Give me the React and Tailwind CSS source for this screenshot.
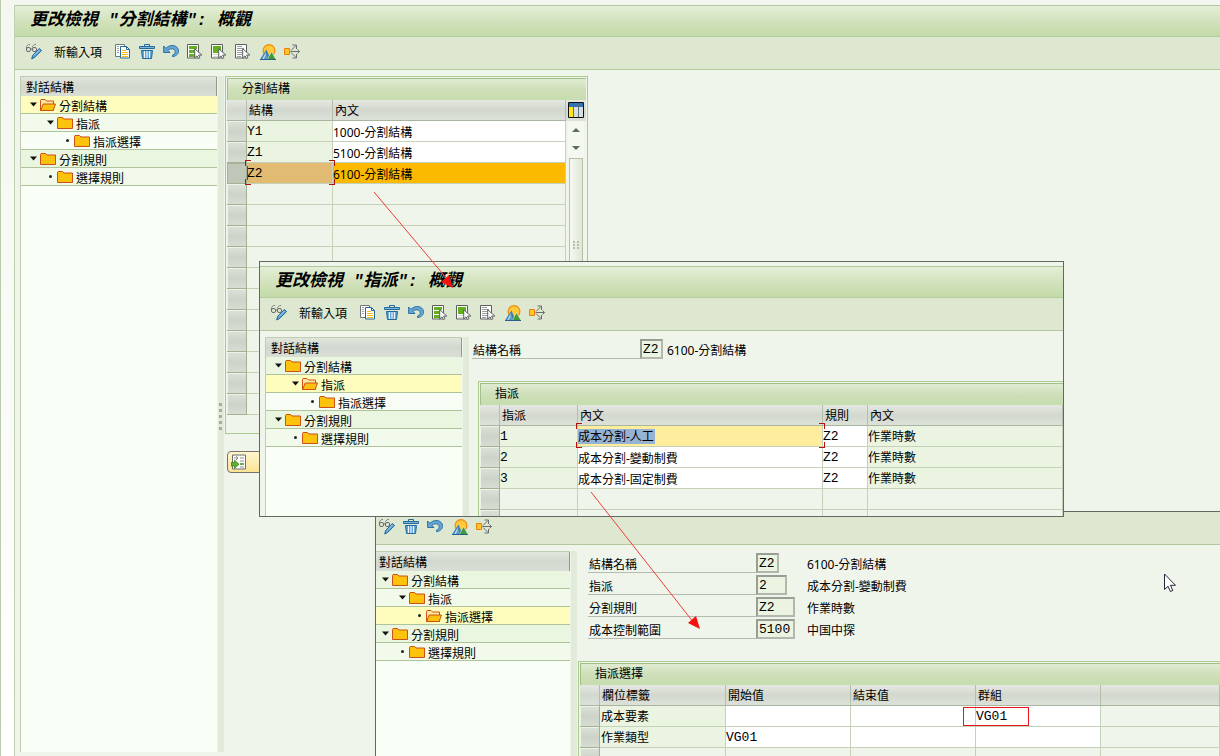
import React from "react";

/* ---------- toolbar icons ---------- */

function Icon({ children }) {
  return (
    <svg className="block size-4" viewBox="0 0 16 16" fill="none" aria-hidden="true">
      {children}
    </svg>
  );
}

const GlassesPencil = () => (
  <Icon>
    <path d="M.5 5V2.500L2.500.500H4M6.500 3.500V2.500L8.500.500h1.500" stroke="#808285" />
    <rect x=".5" y="3.500" width="4" height="4" rx="1.500" stroke="#696b6e" />
    <rect x="6.500" y="3.500" width="4" height="4" rx="1.500" stroke="#696b6e" />
    <path d="M4.500 5h2" stroke="#696b6e" />
    <path d="M13.300 4.500l2.300 2-7 7-2.900 1.500.900-3.500z" fill="#5aa0d6" stroke="#22699b" />
    <path d="M8 11.500L13.500 6" stroke="#a9d0ec" />
  </Icon>
);
const Copy = () => (
  <Icon>
    <path d="M.5.5h9v12h-9z" fill="#fff" stroke="#73767a" />
    <path d="M2 2.500h2M2 4.500h2M2 6.500h2M2 8.500h2" stroke="#a0a4a8" />
    <path d="M5.500 2.500h6l3 3v8.500h-9z" fill="#fff" stroke="#22699b" />
    <path d="M11.500 2.500v3h3" stroke="#22699b" />
    <path d="M7 6.500h4M7 8.500h6M7 10.500h6M7 12.500h6" stroke="#f5bd16" />
  </Icon>
);
const Trash = () => (
  <Icon>
    <path d="M5.500 2.500v-2h5v2" stroke="#22699b" />
    <path d="M.5 2.500h15v2H.5z" fill="#7fb6df" stroke="#22699b" />
    <path d="M2.500 6.500h11l-1 8h-9z" fill="#5b9fd2" stroke="#22699b" />
    <path d="M5.500 7v7M8 7v7M10.500 7v7" stroke="#eef6fb" strokeWidth="1.200" />
  </Icon>
);
const Undo = () => (
  <Icon>
    <path
      d="M.6 2v6.500h6.400L4.900 6.300c2.500-2.400 6.500-1.800 7.200.800.400 1.600-.500 2.900-2.500 3.900v1.700c4-.700 6.400-3.300 5.900-6.400C14.700 1.200 7.500-.5 2.900 4.300z"
      fill="#64a5d5"
      stroke="#22699b"
      strokeWidth=".9"
    />
  </Icon>
);
const Pointer = () => <path d="M7.700 4.700v9.300l2.300-2.100 1.500 2.600 1.500-.8-1.400-2.600h3.300z" fill="#fff" stroke="#5b5e61" />;
const SelectAll = () => (
  <Icon>
    <path d="M.5.500h11v13.500H.5z" fill="#fff" stroke="#5b5e61" />
    <path d="M2 2h8v3H2zM2 6h8v3H2zM2 10h8v3H2z" fill="#63b01d" />
    <Pointer />
  </Icon>
);
const SelectBlock = () => (
  <Icon>
    <path d="M.5.500h11v13.500H.5z" fill="#fff" stroke="#5b5e61" />
    <path d="M2 2h8v7H2z" fill="#63b01d" />
    <path d="M2 10.500h5M2 12.500h5" stroke="#d3d6d3" />
    <Pointer />
  </Icon>
);
const DeselectAll = () => (
  <Icon>
    <path d="M.5.500h11v13.500H.5z" fill="#fff" stroke="#5b5e61" />
    <path d="M2 2.500h5M2 4.500h7M2 6.500h5M2 8.500h5M2 10.500h5M2 12.500h4" stroke="#9a9e9b" />
    <Pointer />
  </Icon>
);
const Mountain = () => (
  <Icon>
    <circle cx="9" cy="6.500" r="5.900" fill="#ffc93a" stroke="#f08c12" strokeWidth="1.200" />
    <path d="M0 15.500L6.300 5.500l4.700 10z" fill="#3f80b3" />
    <path d="M2.200 15L6 7.500 5.500 11 7 12v3z" fill="#b4d8ef" />
    <path d="M4 15l2.500-5 .500 5z" fill="#4c94c9" />
    <path d="M7.300 15.500l4.200-8 4.500 8z" fill="#3f9a38" stroke="#f1f6dd" strokeWidth=".6" />
    <path d="M0 15.500h16" stroke="#27608a" />
  </Icon>
);
const Branch = () => (
  <Icon>
    <path d="M6.500 7.500h9M7 6.500l5-5M7 8.500l5 5M8.500 1h4v4M8.500 14h4v-4M13.500 5.500l2 2-2 2" stroke="#696d70" />
    <path d="M.5 4.500h5v6h-5z" fill="#ffc720" stroke="#f07d14" />
  </Icon>
);

/* ---------- tree ---------- */

const Folder = () => (
  <svg className="block h-3 w-4" viewBox="0 0 16 12" aria-hidden="true">
    <path d="M.5 11.500V1.500l.500-1h4.500l1.500 1.500h8.500v9.500z" fill="#fcc20c" stroke="#cd4f19" />
  </svg>
);
const FolderOpen = () => (
  <svg className="block h-3 w-4" viewBox="0 0 16 12" aria-hidden="true">
    <path d="M.5 11.500V1.500l.500-1h4l1.500 1.500h7v9.500z" fill="#fde9a0" stroke="#cd4f19" />
    <path d="M.7 11.500L3.200 5h12.300l-2.300 6.500z" fill="#fcc20c" stroke="#cd4f19" />
  </svg>
);

const TREE = [
  { text: "分割結構", level: 0, parent: true },
  { text: "指派", level: 1, parent: true },
  { text: "指派選擇", level: 2, parent: false },
  { text: "分割規則", level: 0, parent: true },
  { text: "選擇規則", level: 1, parent: false },
];
const INDENT = ["pl-0", "pl-[17px]", "pl-[34px]"];
const LEVEL_BG = ["bg-[#ebf6e1]", "bg-[#f2faeb]", "bg-[#f8fdf5]"];

function Tree({ selected, flush }) {
  return (
    <nav
      className={
        "shrink-0 border-t border-[#c0cdb1] bg-[#f9fef7] " +
        (flush ? "w-[194px]" : "w-[197px] border-l")
      }
    >
      <h2
        className={
          "h-[19px] border-r border-[#92978f] bg-linear-to-b from-[#e1e6dd] via-[#d2d7cf] to-[#dadfd6] pt-px leading-[19px] " +
          (flush ? "pl-[3px]" : "pl-[5px]")
        }
      >
        對話結構
      </h2>
      <ul>
        {TREE.map((n, i) => (
          <li
            key={n.text}
            className={
              "h-[18px] border-b border-[#afc39b] " +
              (flush ? "pl-1 " : "pl-[7px] ") +
              (i === selected ? "bg-[#fffdbd]" : LEVEL_BG[n.level])
            }
          >
            <a href="#" className={"flex h-[17px] items-start " + INDENT[n.level]}>
              <span className="flex h-[17px] w-3 items-center justify-center pr-[2px] pb-px">
                {n.parent ? (
                  <svg className="h-[5px] w-[7px]" viewBox="0 0 7 5" aria-hidden="true">
                    <path d="M0 .500h7L3.500 4.500z" fill="#111" />
                  </svg>
                ) : (
                  <span className="size-[3px] rounded-full bg-[#222]" />
                )}
              </span>
              <span className="pt-[3px]">{i === selected ? <FolderOpen /> : <Folder />}</span>
              <span className="pt-[3px] pl-[3px]">{n.text}</span>
            </a>
          </li>
        ))}
      </ul>
    </nav>
  );
}

function Splitter({ grip }) {
  return (
    <div className="relative ml-px w-[6px] shrink-0 bg-[#e2ebd9]">
      {grip && (
        <div className="absolute top-[327px] left-px flex flex-col gap-[3px]">
          {[0, 1, 2, 3, 4].map((k) => (
            <i key={k} className="block size-[3px] bg-[#a3b095]" />
          ))}
        </div>
      )}
    </div>
  );
}

/* ---------- window chrome ---------- */

function TitleBar({ children }) {
  return (
    <header className="h-8 border-y border-t-[#b1c69c] border-b-[#b5cc9c] bg-linear-to-b from-[#e4efd6] via-[#d3e2bd] to-[#c3dba8] pl-[15px]">
      <h1 className="font-[Liberation_Mono,Noto_Sans_CJK_TC,monospace] text-[17px] leading-[30px] font-bold whitespace-pre italic">
        {children}
      </h1>
    </header>
  );
}

function ToolButton({ label, children }) {
  return (
    <button type="button" aria-label={label} className="block">
      {children}
    </button>
  );
}

function Toolbar({ full }) {
  return (
    <div
      role="toolbar"
      className={
        "flex h-[33px] items-center gap-2 border-b border-[#b3c79f] bg-[#dee8d0] pb-[2px] " +
        (full ? "pl-[11px]" : "pl-[3px]")
      }
    >
      <ToolButton label="顯示/更改"><GlassesPencil /></ToolButton>
      {full && (
        <>
          <button type="button" className="mr-[5px] ml-1 pt-[2px] leading-4">新輸入項</button>
          <ToolButton label="複製"><Copy /></ToolButton>
        </>
      )}
      <ToolButton label="刪除"><Trash /></ToolButton>
      <ToolButton label="復原"><Undo /></ToolButton>
      {full && (
        <>
          <ToolButton label="全選"><SelectAll /></ToolButton>
          <ToolButton label="選擇區塊"><SelectBlock /></ToolButton>
          <ToolButton label="取消全選"><DeselectAll /></ToolButton>
        </>
      )}
      <span className="flex gap-2 pl-px">
        <ToolButton label="概觀"><Mountain /></ToolButton>
        <ToolButton label="傳輸"><Branch /></ToolButton>
      </span>
    </div>
  );
}

/* ---------- grid ---------- */

const MONO = "font-[Liberation_Mono,Noto_Sans_CJK_TC,monospace] text-[13px]";
const HEAD_BG = "bg-linear-to-b from-[#e4e8e1] via-[#d3d8cf] to-[#dce1d9]";
const TH = "border-r border-b border-r-[#b4beab] border-b-[#a9b59d] p-0 pt-[2px] pl-[2px] text-left font-normal " + HEAD_BG;
const TD = "border-r border-b border-[#c5d2b9] p-0 ";

function Panel({ title, className, children }) {
  return (
    <section className={"border-t border-l border-[#a9cc8c] pt-px pl-px " + className}>
      <h2 className="h-[22px] border-t border-l border-[#a3be8c] bg-linear-to-b from-[#e0ecd2] via-[#cfdfb9] to-[#c6dcae] pl-[14px] leading-[20px]">
        {title}
      </h2>
      {children}
    </section>
  );
}

function Selector({ active, label }) {
  return (
    <td className="border-r border-b border-[#a3b093] p-0">
      <button
        type="button"
        aria-label={label}
        className={
          "block h-5 w-full border-t border-l " +
          (active
            ? "border-[#a9b19f] bg-[#bfc7b8]"
            : "border-[#eef2eb] bg-linear-to-b from-[#dbe0d7] via-[#cdd3c8] to-[#d8ddd4]")
        }
      />
    </td>
  );
}

function Corners() {
  return (
    <span className="pointer-events-none absolute -top-[3px] -right-[3px] -bottom-[2px] -left-[2px] z-10">
      <i className="absolute top-0 left-0 size-[6px] border-t border-l border-[#b3130c]" />
      <i className="absolute top-0 right-0 size-[6px] border-t border-r border-[#b3130c]" />
      <i className="absolute bottom-0 left-0 size-[6px] border-b border-l border-[#b3130c]" />
      <i className="absolute right-0 bottom-0 size-[6px] border-r border-b border-[#b3130c]" />
    </span>
  );
}

function CellInput({ value, label, mono }) {
  return (
    <input
      aria-label={label}
      defaultValue={value}
      className={"block h-5 w-full min-w-0 bg-transparent outline-none " + (mono ? MONO : "pt-px")}
    />
  );
}

function StructureTable() {
  const rows = [
    ["Y1", "1000-分割結構"],
    ["Z1", "5100-分割結構"],
    ["Z2", "6100-分割結構"],
  ];
  return (
    <table className="w-[339px] table-fixed border-separate border-spacing-0">
      <colgroup>
        <col className="w-5" />
        <col className="w-[86px]" />
        <col />
      </colgroup>
      <thead>
        <tr className="h-[21px]">
          <th className={TH} aria-label="選擇" />
          <th className={TH}>結構</th>
          <th className={TH}>內文</th>
        </tr>
      </thead>
      <tbody>
        {rows.map(([code, text], i) => (
          <tr key={code} className="h-[21px]">
            <Selector active={i === 2} label={code} />
            <td className={TD + "relative " + MONO + (i === 2 ? " bg-[#e2bb72]" : " bg-[#ebf4e0]")}>
              <span className="block h-5 pt-[2px] leading-[18px]">{code}</span>
              {i === 2 && (
                <>
                  <i className="absolute top-[3px] left-0 h-[14px] w-px bg-[#2850a8]" />
                  <Corners />
                </>
              )}
            </td>
            <td className={TD + (i === 2 ? "bg-[#fbba00]" : "bg-white")}>
              <CellInput value={text} label={code + " 內文"} />
            </td>
          </tr>
        ))}
        {Array.from({ length: 11 }, (_, k) => (
          <tr key={k} className="h-[21px]">
            <Selector label={"列 " + (k + 4)} />
            <td className={TD} />
            <td className={TD} />
          </tr>
        ))}
      </tbody>
    </table>
  );
}

function AssignTable() {
  const rows = [
    ["1", "成本分割-人工"],
    ["2", "成本分割-變動制費"],
    ["3", "成本分割-固定制費"],
  ];
  return (
    <table className="w-full table-fixed border-separate border-spacing-0">
      <colgroup>
        <col className="w-5" />
        <col className="w-[78px]" />
        <col className="w-[245px]" />
        <col className="w-[45px]" />
        <col />
      </colgroup>
      <thead>
        <tr className="h-[21px]">
          <th className={TH} aria-label="選擇" />
          <th className={TH}>指派</th>
          <th className={TH}>內文</th>
          <th className={TH}>規則</th>
          <th className={TH}>內文</th>
        </tr>
      </thead>
      <tbody>
        {rows.map(([no, text], i) => (
          <tr key={no} className="h-[21px]">
            <Selector label={no} />
            <td className={TD + "bg-[#ebf4e0] " + MONO}>
              <span className="block h-5 pt-[2px] leading-[18px]">{no}</span>
            </td>
            <td className={TD + "relative " + (i === 0 ? "bg-[#ffed9e]" : "bg-white")}>
              {i === 0 ? (
                <span className="block h-5 pt-[3px]">
                  <input
                    aria-label="內文 1"
                    defaultValue={text}
                    className="block h-[15px] w-[77px] bg-[#97b3d3] outline-none"
                  />
                  <Corners />
                </span>
              ) : (
                <CellInput value={text} label={"內文 " + no} />
              )}
            </td>
            <td className={TD + "bg-white"}>
              <CellInput value="Z2" label={"規則 " + no} mono />
            </td>
            <td className={TD + "bg-[#ebf4e0]"}>
              <span className="block h-5 pt-[2px] leading-[18px]">作業時數</span>
            </td>
          </tr>
        ))}
        {[4, 5].map((k) => (
          <tr key={k} className="h-[21px]">
            <Selector label={"列 " + k} />
            <td className={TD} />
            <td className={TD} />
            <td className={TD} />
            <td className={TD} />
          </tr>
        ))}
      </tbody>
    </table>
  );
}

function SelectionTable() {
  const rows = [
    ["成本要素", "", "", "VG01"],
    ["作業類型", "VG01", "", ""],
  ];
  const heads = ["開始值", "結束值", "群組"];
  return (
    <table className="w-full table-fixed border-separate border-spacing-0">
      <colgroup>
        <col className="w-5" />
        <col className="w-[126px]" />
        <col className="w-[125px]" />
        <col className="w-[125px]" />
        <col className="w-[125px]" />
        <col />
      </colgroup>
      <thead>
        <tr className="h-[21px]">
          <th className={TH} aria-label="選擇" />
          <th className={TH}>欄位標籤</th>
          {heads.map((h) => (
            <th key={h} className={TH}>{h}</th>
          ))}
          <th className={TH} aria-label="空白" />
        </tr>
      </thead>
      <tbody>
        {rows.map(([name, ...vals]) => (
          <tr key={name} className="h-[21px]">
            <Selector label={name} />
            <td className={TD + "bg-[#ebf4e0]"}>
              <span className="block h-5 pt-[2px] pl-px leading-[18px]">{name}</span>
            </td>
            {vals.map((v, k) => (
              <td key={k} className={TD + "relative bg-white"}>
                <CellInput value={v} label={name + " " + heads[k]} mono />
                {k === 2 && v && (
                  <span className="pointer-events-none absolute top-px -left-[13px] h-[19px] w-[66px] border border-[#e8141c]" />
                )}
              </td>
            ))}
            <td className={TD} />
          </tr>
        ))}
        <tr className="h-[21px]">
          <Selector label="列 3" />
          {[0, 1, 2, 3, 4].map((k) => (
            <td key={k} className={TD} />
          ))}
        </tr>
      </tbody>
    </table>
  );
}

/* ---------- header fields ---------- */

function Field({ id, label, value, text, size, column }) {
  return (
    <div className="flex h-5">
      <label htmlFor={id} className="w-[168px] border-b border-[#b4bbb0] pt-[3px] pl-px leading-[18px]">
        {label}
      </label>
      <span className={"flex " + column}>
        <input
          id={id}
          readOnly
          defaultValue={value}
          className={
            "h-5 border-2 border-[#b3b7ae] border-t-[#999e94] border-l-[#999e94] bg-[#ebf4e0] pt-px pl-px outline-none " +
            MONO + " " + size
          }
        />
      </span>
      <span className="pt-[3px] leading-[18px]">{text}</span>
    </div>
  );
}

/* ---------- windows ---------- */

function MainWindow() {
  return (
    <div className="flex h-full border-l border-[#bccbb0] bg-linear-to-b from-[#f3f7f0] to-white">
      <main className="mt-[5px] ml-[13px] flex min-w-0 flex-1 flex-col border-l border-[#c0d0b1] bg-[#eff5ea]">
        <TitleBar>{'更改檢視 "分割結構": 概觀'}</TitleBar>
        <Toolbar full />
        <div className="mt-[6px] mb-1 flex min-h-0 flex-1 pl-[5px]">
          <Tree selected={0} />
          <Splitter grip />
          <div className="ml-px">
            <Panel title="分割結構" className="h-[358px] w-[363px] border-r border-b pr-px">
              <div className="flex">
                <StructureTable />
                <div className="flex w-5 flex-col items-center">
                  <button
                    type="button"
                    aria-label="表格設定"
                    className={"flex h-[21px] w-5 justify-center pt-[2px] " + HEAD_BG}
                  >
                    <svg className="size-4" viewBox="0 0 16 16" aria-hidden="true">
                      <path d="M.5.500h15v15H.500z" fill="#fff" stroke="#111" />
                      <path d="M1 1h14v4H1z" fill="#2f73b8" />
                      <path d="M1 5h4.500v10H1z" fill="#ffe51c" />
                      <path d="M6 5h4v10H6zM11 5h4v10h-4z" fill="#d6dde3" />
                      <path d="M5.500 2v13M10.500 2v13" stroke="#5d7079" />
                    </svg>
                  </button>
                  <button type="button" aria-label="向上捲動" className="flex h-[17px] w-4 items-center justify-center bg-[#f4f8f1]">
                    <svg className="h-1 w-2" viewBox="0 0 8 4" aria-hidden="true"><path d="M0 4l4-4 4 4z" fill="#5d6f4e" /></svg>
                  </button>
                  <button type="button" aria-label="向下捲動" className="flex h-5 w-4 items-center justify-center bg-[#f4f8f1]">
                    <svg className="h-1 w-2" viewBox="0 0 8 4" aria-hidden="true"><path d="M0 0l4 4 4-4z" fill="#5d6f4e" /></svg>
                  </button>
                  <div className="flex h-[174px] w-[14px] items-center justify-center border border-[#b4c3a5] bg-linear-to-r from-[#f5f9f2] to-[#dfe7d7]">
                    <svg className="size-2" viewBox="0 0 8 8" aria-hidden="true">
                      <path d="M1 0h2v2H1zM5 0h2v2H5zM1 3h2v2H1zM5 3h2v2H5zM1 6h2v2H1zM5 6h2v2H5z" fill="#b5c0aa" />
                    </svg>
                  </div>
                </div>
              </div>
            </Panel>
            <button
              type="button"
              aria-label="定位"
              className="mt-[17px] ml-[2px] flex h-[22px] w-20 items-center rounded-sm border border-[#76746a] bg-linear-to-b from-[#fff6cd] to-[#fbe394] pl-[3px]"
            >
              <Icon>
                <path d="M1.500 1h13v14h-13z" fill="#fff" stroke="#6b6e6b" />
                <path d="M3 4h4M5 2l2 2-2 2M9 4h4M9 7h4M9 13h4" stroke="#8b8f8b" />
                <path d="M9 10h4" stroke="#3f8f20" strokeWidth="1.500" />
                <path d="M0 8.500h3.500V6L8 10.300l-4.500 4.200V12H0z" fill="#5fb02c" stroke="#2f7a17" strokeWidth=".7" />
              </Icon>
            </button>
          </div>
        </div>
      </main>
    </div>
  );
}

function AssignWindow() {
  return (
    <section className="absolute top-[261px] left-[259px] flex h-[256px] w-[805px] flex-col overflow-hidden border border-[#626863] bg-[#eff5ea] pt-1">
      <TitleBar>{'更改檢視 "指派": 概觀'}</TitleBar>
      <Toolbar full />
      <div className="mt-[6px] flex min-h-0 flex-1 pl-[5px]">
        <Tree selected={1} />
        <Splitter />
        <div className="min-w-0 flex-1 pt-[2px] pl-[3px]">
          <Field id="a-name" label="結構名稱" value="Z2" text="6100-分割結構" size="w-[23px]" column="w-[27px]" />
          <Panel title="指派" className="mt-[22px] ml-[6px]">
            <AssignTable />
          </Panel>
        </div>
      </div>
    </section>
  );
}

function SelectionWindow() {
  return (
    <section className="absolute top-[511px] right-0 bottom-0 left-[375px] flex flex-col overflow-hidden border-t border-l border-[#626863] bg-[#eff5ea]">
      <Toolbar />
      <div className="mt-[6px] flex min-h-0 flex-1">
        <Tree selected={2} flush />
        <Splitter />
        <div className="min-w-0 flex-1 pt-[2px] pl-px">
          <div className="flex flex-col gap-[2px] pl-[10px]">
            <Field id="s-name" label="結構名稱" value="Z2" text="6100-分割結構" size="w-[23px]" column="w-[51px]" />
            <Field id="s-assign" label="指派" value="2" text="成本分割-變動制費" size="w-[31px]" column="w-[51px]" />
            <Field id="s-rule" label="分割規則" value="Z2" text="作業時數" size="w-[39px]" column="w-[51px]" />
            <Field id="s-area" label="成本控制範圍" value="5100" text="中国中探" size="w-[39px]" column="w-[51px]" />
          </div>
          <Panel title="指派選擇" className="mt-[22px]">
            <SelectionTable />
          </Panel>
        </div>
      </div>
    </section>
  );
}

export default function App() {
  return (
    <div className="relative h-screen overflow-hidden bg-[#eff5ea] font-[Noto_Sans,Noto_Sans_CJK_TC,sans-serif] text-[12px] leading-4 text-black">
      <MainWindow />
      <SelectionWindow />
      <AssignWindow />

      <svg className="pointer-events-none absolute top-[190px] left-[372px] h-[100px] w-[84px]" viewBox="0 0 84 100" aria-hidden="true">
        <path d="M2 2l74 88" stroke="#f23b32" />
        <path d="M81 98l-12-6 8-7z" fill="#f5120e" />
      </svg>
      <svg className="pointer-events-none absolute top-[490px] left-[588px] h-[142px] w-[114px]" viewBox="0 0 114 142" aria-hidden="true">
        <path d="M3 2l103 131" stroke="#f23b32" />
        <path d="M112 139l-12-6 8-7z" fill="#f5120e" />
      </svg>
      <svg className="pointer-events-none absolute top-[573px] left-[1164px] h-5 w-3" viewBox="0 0 12 20" aria-hidden="true">
        <path d="M.500 1v15.500l3.600-3.200 2.300 5.200 2.400-1-2.300-5.200h5z" fill="#fff" stroke="#22243a" />
      </svg>
    </div>
  );
}
